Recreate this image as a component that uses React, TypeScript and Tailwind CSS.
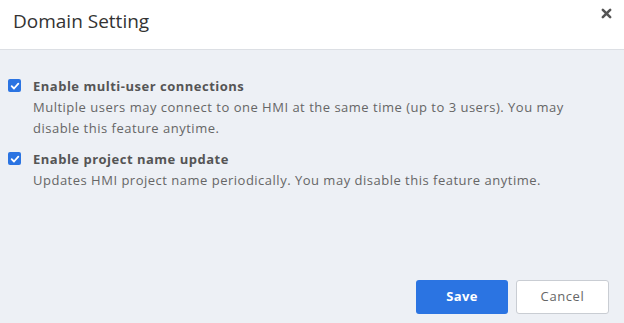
import React from 'react';

const Check: React.FC = () => (
  <span className="flex h-[13px] w-[13px] shrink-0 items-center justify-center rounded-[2px] bg-[#2b74e2]">
    <svg viewBox="0 0 12 12" className="h-[10px] w-[10px]" fill="none">
      <path d="M2 6.2 L4.8 9 L10 3.2" stroke="#fff" strokeWidth="2.2" strokeLinecap="round" strokeLinejoin="round" />
    </svg>
  </span>
);

const options = [
  {
    label: 'Enable multi-user connections',
    desc: 'Multiple users may connect to one HMI at the same time (up to 3 users). You may disable this feature anytime.',
  },
  {
    label: 'Enable project name update',
    desc: 'Updates HMI project name periodically. You may disable this feature anytime.',
  },
];

const App: React.FC = () => {
  return (
    <div className="flex h-[323px] w-[624px] flex-col bg-[#edf0f5] font-['Open_Sans',sans-serif]">
      {/* Header */}
      <div className="flex h-[50px] shrink-0 items-start justify-between border-b border-[#dcdfe4] bg-white pl-[13px] pr-[12px]">
        <h1 className="mt-[8px] text-[19px] leading-[26px] text-[#333]">Domain Setting</h1>
        <button className="mt-[7px] flex h-[12px] w-[12px] items-center justify-center">
          <svg viewBox="0 0 12 12" className="h-[11px] w-[11px]">
            <path d="M2 2 L10 10 M10 2 L2 10" stroke="#555" strokeWidth="2.8" strokeLinecap="round" />
          </svg>
        </button>
      </div>

      {/* Body */}
      <div className="flex flex-1 flex-col pl-[8px] pr-[15px] pt-[25px] pb-[9px]">
        <div className="flex flex-col gap-[9px]">
          {options.map((o) => (
            <div key={o.label} className="flex gap-[12px]">
              <div className="pt-[4px]">
                <Check />
              </div>
              <div className="flex w-[540px] flex-col text-[13px] text-[#555]">
                <span className="font-bold leading-[22px] tracking-[0.5px]">{o.label}</span>
                <span className="leading-[21px] tracking-[0.5px] text-[#666]">{o.desc}</span>
              </div>
            </div>
          ))}
        </div>

        <div className="mt-auto flex justify-end gap-[8px]">
          <button className="h-[34px] w-[92px] rounded-[3px] bg-[#2b74e2] text-[13px] font-bold tracking-[0.4px] text-white">Save</button>
          <button className="h-[34px] w-[93px] rounded-[3px] border border-[#c9cdd3] bg-white text-[13px] tracking-[0.6px] text-[#666]">Cancel</button>
        </div>
      </div>
    </div>
  );
};

export default App;
